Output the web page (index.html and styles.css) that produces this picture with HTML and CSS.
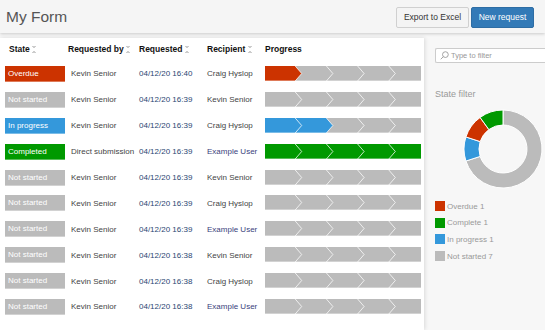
FILE: index.html
```html
<!DOCTYPE html>
<html lang="en">
<head>
  <meta charset="UTF-8">
  <title>My Form</title>
  <link rel="stylesheet" href="styles.css">
</head>
<body>

  <!-- Header -->
  <header class="topbar">
    <h1>My Form</h1>
    <div class="actions">
      <button class="btn btn-default">Export to Excel</button>
      <button class="btn btn-primary">New request</button>
    </div>
  </header>

  <div class="main">
    <!-- Table -->
    <div class="panel">
      <table class="grid">
        <colgroup>
          <col class="c-state">
          <col class="c-by">
          <col class="c-req">
          <col class="c-rec">
          <col class="c-prog">
        </colgroup>
        <thead>
          <tr>
            <th class="th-state">State <span class="sort"></span></th>
            <th>Requested by <span class="sort"></span></th>
            <th>Requested <span class="sort"></span></th>
            <th>Recipient <span class="sort"></span></th>
            <th>Progress</th>
          </tr>
        </thead>
        <tbody id="rows"></tbody>
      </table>
    </div>

    <!-- Sidebar -->
    <aside class="sidebar">
      <div class="search">
        <svg width="9" height="9" viewBox="0 0 10 10"><circle cx="6" cy="4" r="3.2" fill="none" stroke="#999" stroke-width="1"/><line x1="3.7" y1="6.3" x2="0.8" y2="9.2" stroke="#999" stroke-width="1"/></svg>
        <span>Type to filter</span>
      </div>
      <div class="filter-title">State filter</div>
      <div class="donut">
        <svg width="80" height="80" viewBox="0 0 80 80" id="donut"></svg>
      </div>
      <ul class="legend">
        <li><span class="sw overdue"></span>Overdue 1</li>
        <li><span class="sw completed"></span>Complete 1</li>
        <li><span class="sw inprogress"></span>In progress 1</li>
        <li><span class="sw notstarted"></span>Not started 7</li>
      </ul>
    </aside>
  </div>

<script>
  const COLORS = {
    overdue: "#cc3300",
    notstarted: "#bbbbbb",
    inprogress: "#3498db",
    completed: "#009900"
  };

  const rows = [
    ["overdue", "Overdue", "Kevin Senior", "04/12/20 16:40", "Craig Hyslop", 1],
    ["notstarted", "Not started", "Kevin Senior", "04/12/20 16:39", "Kevin Senior", 0],
    ["inprogress", "In progress", "Kevin Senior", "04/12/20 16:39", "Craig Hyslop", 2],
    ["completed", "Completed", "Direct submission", "04/12/20 16:39", "Example User", 5],
    ["notstarted", "Not started", "Kevin Senior", "04/12/20 16:39", "Kevin Senior", 0],
    ["notstarted", "Not started", "Kevin Senior", "04/12/20 16:39", "Craig Hyslop", 0],
    ["notstarted", "Not started", "Kevin Senior", "04/12/20 16:39", "Example User", 0],
    ["notstarted", "Not started", "Kevin Senior", "04/12/20 16:38", "Kevin Senior", 0],
    ["notstarted", "Not started", "Kevin Senior", "04/12/20 16:38", "Craig Hyslop", 0],
    ["notstarted", "Not started", "Kevin Senior", "04/12/20 16:38", "Example User", 0]
  ];

  // progress bar: 5 chevron steps
  function progressSvg(state, done) {
    const w = 156, h = 15, seg = 31.2, tip = 6.5;
    let svg = `<svg width="${w}" height="${h}" viewBox="0 0 ${w} ${h}">`;
    svg += `<rect width="${w}" height="${h}" fill="${COLORS.notstarted}"/>`;
    if (done >= 5) {
      svg += `<rect width="${w}" height="${h}" fill="${COLORS[state]}"/>`;
    } else if (done > 0) {
      const b = done * seg - 1;
      svg += `<polygon points="0,0 ${b},0 ${b + tip},${h / 2} ${b},${h} 0,${h}" fill="${COLORS[state]}"/>`;
    }
    for (let i = 1; i < 5; i++) {
      const b = i * seg - 1;
      svg += `<polyline points="${b},0 ${b + tip},${h / 2} ${b},${h}" fill="none" stroke="rgba(255,255,255,0.75)" stroke-width="1"/>`;
    }
    svg += `<rect y="${h - 1}" width="${w}" height="1" fill="rgba(255,255,255,0.35)"/>`;
    return svg + `</svg>`;
  }

  const tbody = document.getElementById("rows");
  rows.forEach(row => {
    const tr = document.createElement("tr");
    const recClass = row[4] === "Example User" ? "link" : "";
    tr.innerHTML = `
      <td><span class="badge ${row[0]}">${row[1]}</span></td>
      <td class="by">${row[2]}</td>
      <td class="date">${row[3]}</td>
      <td class="${recClass}">${row[4]}</td>
      <td class="prog">${progressSvg(row[0], row[5])}</td>
    `;
    tbody.appendChild(tr);
  });

  // donut chart
  function drawDonut() {
    const data = [
      ["notstarted", 7], ["inprogress", 1], ["overdue", 1], ["completed", 1]
    ];
    const total = 10, cx = 40, cy = 40, r1 = 39, r2 = 24;
    const svg = document.getElementById("donut");
    let a = 0, out = "";
    const pt = (ang, r) => {
      const rad = (ang - 90) * Math.PI / 180;
      return `${(cx + r * Math.cos(rad)).toFixed(2)},${(cy + r * Math.sin(rad)).toFixed(2)}`;
    };
    data.forEach(([key, n]) => {
      const b = a + n / total * 360;
      const big = b - a > 180 ? 1 : 0;
      out += `<path d="M${pt(a, r1)} A${r1},${r1} 0 ${big} 1 ${pt(b, r1)} L${pt(b, r2)} A${r2},${r2} 0 ${big} 0 ${pt(a, r2)} Z" fill="${COLORS[key]}" stroke="#fff" stroke-width="1"/>`;
      a = b;
    });
    svg.innerHTML = out;
  }
  drawDonut();
</script>
</body>
</html>
```

FILE: styles.css
```css
body {
  margin: 0;
  width: 545px;
  height: 330px;
  overflow: hidden;
  font-family: "Liberation Sans", Arial, sans-serif;
  background: #f7f7f7;
  color: #333;
}

/* Header */
.topbar {
  height: 33px;
  display: flex;
  align-items: center;
  justify-content: space-between;
  padding: 0 11px 0 6px;
  background: #f5f5f5;
  box-shadow: 0 1px 3px rgba(0, 0, 0, 0.18);
  position: relative;
  z-index: 2;
}

.topbar h1 {
  margin: 0;
  font-size: 15.5px;
  font-weight: 400;
  color: #555;
  padding-top: 1px;
}

.actions {
  display: flex;
  gap: 2px;
  padding-top: 1px;
}

.btn {
  height: 21px;
  font-family: "Liberation Sans", Arial, sans-serif;
  font-size: 8.5px;
  border-radius: 2px;
  padding: 0;
  white-space: nowrap;
  cursor: pointer;
}

.btn-default {
  width: 73px;
  background: #f4f4f4;
  border: 1px solid #d0d0d0;
  color: #333;
}

.btn-primary {
  width: 63px;
  background: #337ab7;
  border: 1px solid #2e6da4;
  color: #fff;
}

/* Layout */
.main {
  display: flex;
  padding-top: 5px;
  height: 292px;
}

.panel {
  width: 424px;
  background: #fff;
  box-shadow: 1px 0 4px rgba(0, 0, 0, 0.12);
  position: relative;
  z-index: 1;
}

/* Table */
.grid {
  border-collapse: collapse;
  table-layout: fixed;
  margin-left: 5px;
  font-size: 8px;
}

.c-state { width: 63px; }
.c-by { width: 71px; }
.c-req { width: 68px; }
.c-rec { width: 58px; }
.c-prog { width: 156px; }

th {
  text-align: left;
  font-size: 8.5px;
  font-weight: 700;
  color: #111;
  height: 22px;
  padding: 0 0 1px;
  white-space: nowrap;
}

th.th-state {
  padding-left: 4px;
}

.sort {
  display: inline-block;
  width: 4px;
  height: 7px;
  vertical-align: -1px;
  background:
    linear-gradient(to top right, transparent 50%, #ccc 50%) 0 0 / 2px 3px no-repeat,
    linear-gradient(to top left, transparent 50%, #ccc 50%) 2px 0 / 2px 3px no-repeat,
    linear-gradient(to bottom right, transparent 50%, #ccc 50%) 0 4px / 2px 3px no-repeat,
    linear-gradient(to bottom left, transparent 50%, #ccc 50%) 2px 4px / 2px 3px no-repeat;
}

td {
  height: 25.9px;
  padding: 0;
  white-space: nowrap;
  color: #444;
}

td.by {
  padding-left: 3px;
}

td.date {
  color: #2a4672;
}

td.link {
  color: #3a3f7c;
}

td.prog svg {
  display: block;
  margin-top: -1px;
}

.badge {
  display: block;
  width: 57px;
  height: 16px;
  line-height: 16px;
  padding-left: 3px;
  color: #fff;
  font-size: 8px;
  box-shadow: inset 0 -1px rgba(255, 255, 255, 0.35);
}

.badge.overdue { background: #cc3300; }
.badge.notstarted { background: #bbbbbb; }
.badge.inprogress { background: #3498db; }
.badge.completed { background: #009900; }

/* Sidebar */
.sidebar {
  flex: 1;
  padding: 10px 0 0 11px;
}

.search {
  display: flex;
  align-items: center;
  gap: 2px;
  height: 13px;
  background: #fff;
  border: 1px solid #ccc;
  border-right: none;
  border-radius: 2px 0 0 2px;
  padding-left: 4px;
  font-size: 7.5px;
  color: #999;
}

.filter-title {
  margin-top: 26px;
  font-size: 9px;
  color: #999;
}

.donut {
  display: flex;
  padding: 10px 0 0 28px;
}

.legend {
  list-style: none;
  margin: 9px 0 0;
  padding: 0;
}

.legend li {
  display: flex;
  align-items: center;
  height: 16.6px;
  font-size: 8px;
  color: #999;
}

.sw {
  width: 10px;
  height: 10px;
  margin-right: 2px;
}

.sw.overdue { background: #cc3300; }
.sw.completed { background: #009900; }
.sw.inprogress { background: #3498db; }
.sw.notstarted { background: #bbbbbb; }
```
